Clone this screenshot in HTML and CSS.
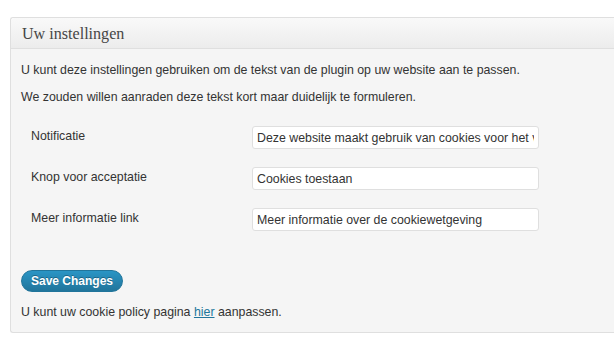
FILE: index.html
```html
<!DOCTYPE html>
<html>
<head>
    <meta charset="utf-8">
    <title>Uw instellingen</title>
    <link rel="stylesheet" href="styles.css">
</head>
<body>
    <div class="postbox">
        <h3 class="hndle">Uw instellingen</h3>
        <div class="inside">
            <p class="first">U kunt deze instellingen gebruiken om de tekst van de plugin op uw website aan te passen.</p>
            <p>We zouden willen aanraden deze tekst kort maar duidelijk te formuleren.</p>

            <div class="form-table">
                <label class="field-label">Notificatie</label>
                <input type="text" class="regular-text" value="Deze website maakt gebruik van cookies voor het verbeteren van de gebruikerservaring.">

                <label class="field-label">Knop voor acceptatie</label>
                <input type="text" class="regular-text" value="Cookies toestaan">

                <label class="field-label">Meer informatie link</label>
                <input type="text" class="regular-text" value="Meer informatie over de cookiewetgeving">
            </div>

            <button class="button-primary">Save Changes</button>

            <p class="last">U kunt uw cookie policy pagina <a href="#">hier</a> aanpassen.</p>
        </div>
    </div>
</body>
</html>
```

FILE: styles.css
```css
html, body {
    margin: 0;
    padding: 0;
    background: #fff;
    overflow: hidden;
}
body {
    font-family: "Liberation Sans", Arial, sans-serif;
    font-size: 12.35px;
    color: #333;
    padding: 17px 0 0 10px;
}
.postbox {
    background: #f5f5f5;
    border: 1px solid #dfdfdf;
    border-right: none;
    border-radius: 3px 0 0 3px;
    box-shadow: inset 0 1px 0 #fff;
}
.hndle {
    margin: 0;
    height: 30px;
    line-height: 31px;
    padding: 0 11px;
    font-family: "Liberation Serif", Georgia, serif;
    font-size: 16.1px;
    font-weight: normal;
    color: #464646;
    background: linear-gradient(to bottom, #f9f9f9, #ececec);
    border-bottom: 1px solid #dfdfdf;
    border-radius: 3px 0 0 0;
}
.inside {
    padding: 0 10px 11px;
}
.inside p {
    margin: 10px 0 0;
    line-height: 17px;
}
.inside p.first {
    margin-top: 13px;
}
.form-table {
    display: grid;
    grid-template-columns: 221px 287px;
    row-gap: 18px;
    margin: 20px 0 0 10px;
}
.field-label {
    padding-top: 2px;
    line-height: 17px;
}
.regular-text {
    box-sizing: border-box;
    height: 23px;
    width: 287px;
    margin: 0;
    padding: 2px 4px 1px;
    font-family: "Liberation Sans", Arial, sans-serif;
    font-size: 12.35px;
    color: #333;
    background: #fff;
    border: 1px solid #dfdfdf;
    border-radius: 3px;
    outline: none;
}
.button-primary {
    display: block;
    margin-top: 39px;
    height: 22px;
    padding: 0 9px;
    font-family: "Liberation Sans", Arial, sans-serif;
    font-size: 12px;
    font-weight: bold;
    color: #fff;
    text-shadow: 0 -1px 0 rgba(0,0,0,0.3);
    background: linear-gradient(to bottom, #2a95c5, #21759b);
    border: 1px solid #21759b;
    border-radius: 11px;
    cursor: pointer;
}
.inside p.last {
    margin-top: 12px;
}
a {
    color: #21759b;
}
```
